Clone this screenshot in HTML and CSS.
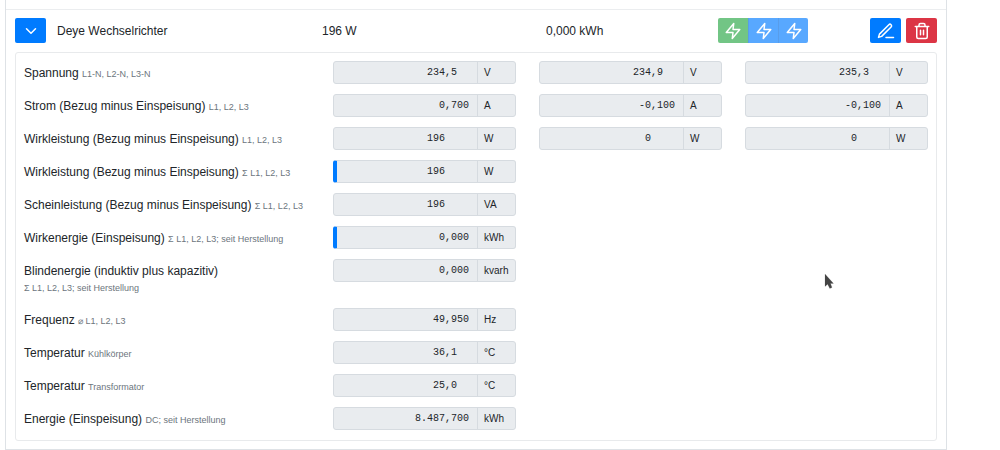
FILE: index.html
```html
<!DOCTYPE html>
<html lang="de">
<head>
<meta charset="utf-8">
<meta name="viewport" content="width=device-width, initial-scale=1">
<title>Stromzähler</title>
<link rel="stylesheet" href="styles.css">
</head>
<body>
<svg class="sprite" aria-hidden="true">
  <symbol id="zap" viewBox="0 0 24 24"><path d="M13 2 3 14h9l-1 8 10-12h-9l1-8z"/></symbol>
</svg>
<main class="meters">
  <header class="meter-head">
    <button class="btn btn-primary" type="button" aria-label="Details einklappen" aria-expanded="true">
      <svg class="icon" viewBox="0 0 24 24"><path d="m6 9 6 6 6-6"/></svg>
    </button>
    <span>Deye Wechselrichter</span>
    <span>196 W</span>
    <span>0,000 kWh</span>
    <div class="phases">
      <button class="btn btn-success" type="button" disabled aria-label="L1"><svg class="icon"><use href="#zap"/></svg></button>
      <button class="btn btn-primary" type="button" disabled aria-label="L2"><svg class="icon"><use href="#zap"/></svg></button>
      <button class="btn btn-primary" type="button" disabled aria-label="L3"><svg class="icon"><use href="#zap"/></svg></button>
    </div>
    <div class="actions">
      <button class="btn btn-primary" type="button" aria-label="Bearbeiten">
        <svg class="icon" viewBox="0 0 24 24"><path d="M12 20.500h10M15.800 3.600a2 2 0 0 1 3 3L6.200 19.200l-4.200 1.300 1.300-4.300L15.800 3.600z"/></svg>
      </button>
      <button class="btn btn-danger" type="button" aria-label="Löschen">
        <svg class="icon" viewBox="0 0 24 24"><path d="M3 6h18M19 6v14a2 2 0 0 1-2 2H7a2 2 0 0 1-2-2V6m3 0V4a2 2 0 0 1 2-2h4a2 2 0 0 1 2 2v2M10 11v6M14 11v6"/></svg>
      </button>
    </div>
  </header>

  <section class="card">
    <div class="row">
      <label class="name" for="u1">Spannung <small>L1-N, L2-N, L3-N</small></label>
      <div class="field"><input id="u1" readonly value="234,5&nbsp;&nbsp;"><span class="unit">V</span></div>
      <div class="field"><input aria-label="Spannung L2-N" readonly value="234,9&nbsp;&nbsp;"><span class="unit">V</span></div>
      <div class="field"><input aria-label="Spannung L3-N" readonly value="235,3&nbsp;&nbsp;"><span class="unit">V</span></div>
    </div>
    <div class="row">
      <label class="name" for="i1">Strom (Bezug minus Einspeisung) <small>L1, L2, L3</small></label>
      <div class="field"><input id="i1" readonly value="0,700"><span class="unit">A</span></div>
      <div class="field"><input aria-label="Strom L2" readonly value="-0,100"><span class="unit">A</span></div>
      <div class="field"><input aria-label="Strom L3" readonly value="-0,100"><span class="unit">A</span></div>
    </div>
    <div class="row">
      <label class="name" for="p1">Wirkleistung (Bezug minus Einspeisung) <small>L1, L2, L3</small></label>
      <div class="field"><input id="p1" readonly value="196&nbsp;&nbsp;&nbsp;&nbsp;"><span class="unit">W</span></div>
      <div class="field"><input aria-label="Wirkleistung L2" readonly value="0&nbsp;&nbsp;&nbsp;&nbsp;"><span class="unit">W</span></div>
      <div class="field"><input aria-label="Wirkleistung L3" readonly value="0&nbsp;&nbsp;&nbsp;&nbsp;"><span class="unit">W</span></div>
    </div>
    <div class="row">
      <label class="name" for="ps">Wirkleistung (Bezug minus Einspeisung) <small>Σ L1, L2, L3</small></label>
      <div class="field field-main"><input id="ps" readonly value="196&nbsp;&nbsp;&nbsp;&nbsp;"><span class="unit">W</span></div>
    </div>
    <div class="row">
      <label class="name" for="ss">Scheinleistung (Bezug minus Einspeisung) <small>Σ L1, L2, L3</small></label>
      <div class="field"><input id="ss" readonly value="196&nbsp;&nbsp;&nbsp;&nbsp;"><span class="unit">VA</span></div>
    </div>
    <div class="row">
      <label class="name" for="we">Wirkenergie (Einspeisung) <small>Σ L1, L2, L3; seit Herstellung</small></label>
      <div class="field field-main"><input id="we" readonly value="0,000"><span class="unit">kWh</span></div>
    </div>
    <div class="row">
      <label class="name" for="be">Blindenergie (induktiv plus kapazitiv) <small>Σ L1, L2, L3; seit Herstellung</small></label>
      <div class="field"><input id="be" readonly value="0,000"><span class="unit">kvarh</span></div>
    </div>
    <div class="row">
      <label class="name" for="fr">Frequenz <small>⌀ L1, L2, L3</small></label>
      <div class="field"><input id="fr" readonly value="49,950"><span class="unit">Hz</span></div>
    </div>
    <div class="row">
      <label class="name" for="tk">Temperatur <small>Kühlkörper</small></label>
      <div class="field"><input id="tk" readonly value="36,1&nbsp;&nbsp;"><span class="unit">°C</span></div>
    </div>
    <div class="row">
      <label class="name" for="tt">Temperatur <small>Transformator</small></label>
      <div class="field"><input id="tt" readonly value="25,0&nbsp;&nbsp;"><span class="unit">°C</span></div>
    </div>
    <div class="row">
      <label class="name" for="dc">Energie (Einspeisung) <small>DC; seit Herstellung</small></label>
      <div class="field"><input id="dc" readonly value="8.487,700"><span class="unit">kWh</span></div>
    </div>
  </section>
</main>
<svg class="pointer" viewBox="0 0 12 17" aria-hidden="true"><path d="M1 1v12.500l2.600-2.300 2.200 4.300 2.200-1-1.500-4H9.500z"/></svg>
</body>
</html>
```
FILE: styles.css
```css
* {
  box-sizing: border-box;
}

body {
  margin: 0 53px 0 5px;
  background: #fff;
  color: #212529;
  font: 12px/16px "Liberation Sans", Arial, sans-serif;
}

.sprite {
  position: absolute;
  width: 0;
  height: 0;
}

.meters {
  padding: 9px 9px 8px;
  border: 1px solid #dee2e6;
  border-top: 0;
  background: linear-gradient(#ebedef, #ebedef) 0 9px / 100% 1px no-repeat;
}

.meter-head {
  display: grid;
  grid-template-columns: 42px 265fr 224fr 172fr 90px 129fr;
  align-items: center;
  padding: 9px 0;
}

.btn {
  display: flex;
  align-items: center;
  justify-content: center;
  width: 31px;
  height: 25px;
  padding: 0;
  border: 0;
  border-radius: 2px;
  color: #fff;
}

.btn-primary {
  background: #007bff;
}

.btn-success {
  background: #28a745;
}

.btn-danger {
  background: #dc3545;
}

.icon {
  width: 18px;
  height: 18px;
  fill: none;
  stroke: currentColor;
  stroke-width: 2;
  stroke-linecap: round;
  stroke-linejoin: round;
}

.phases {
  display: flex;
}

.phases .btn {
  width: 30px;
  opacity: 0.65;
  border-radius: 0;
}

.phases .btn + .btn {
  border-left: 1px solid #0069e0;
}

.phases .btn:first-child {
  border-radius: 2px 0 0 2px;
}

.phases .btn:last-child {
  border-radius: 0 2px 2px 0;
}

.actions {
  display: flex;
  justify-content: flex-end;
  gap: 5px;
}

.card {
  display: grid;
  gap: 10px;
  padding: 8px 8px 10px;
  border: 1px solid #e8eaec;
  border-radius: 3px;
}

.row {
  display: grid;
  grid-template-columns: 1fr 183px 183px 183px;
  column-gap: 23px;
  align-items: start;
}

.name {
  padding: 4px 0 3px;
}

.name small {
  display: inline-block;
  color: #6c757d;
  font-size: 9px;
  line-height: 12px;
  white-space: nowrap;
}

.field {
  display: flex;
  height: 23px;
  border: 1px solid #d6dbe0;
  border-radius: 3px;
  background: #e9ecef;
  overflow: hidden;
}

.field-main {
  border-left: 4px solid #007bff;
}

.field input {
  flex: 1;
  min-width: 0;
  padding: 0 8px;
  border: 0;
  background: none;
  color: #212529;
  font: 10px/16px "Liberation Mono", monospace;
  text-align: right;
}

.unit {
  width: 38px;
  padding: 3px 0 2px 6px;
  border-left: 1px solid #d6dbe0;
  font-size: 10px;
}

.pointer {
  position: absolute;
  top: 273px;
  left: 824px;
  width: 12px;
  height: 17px;
  fill: #444;
  stroke: #e4e4e4;
  stroke-width: 1;
  paint-order: stroke;
}
```
